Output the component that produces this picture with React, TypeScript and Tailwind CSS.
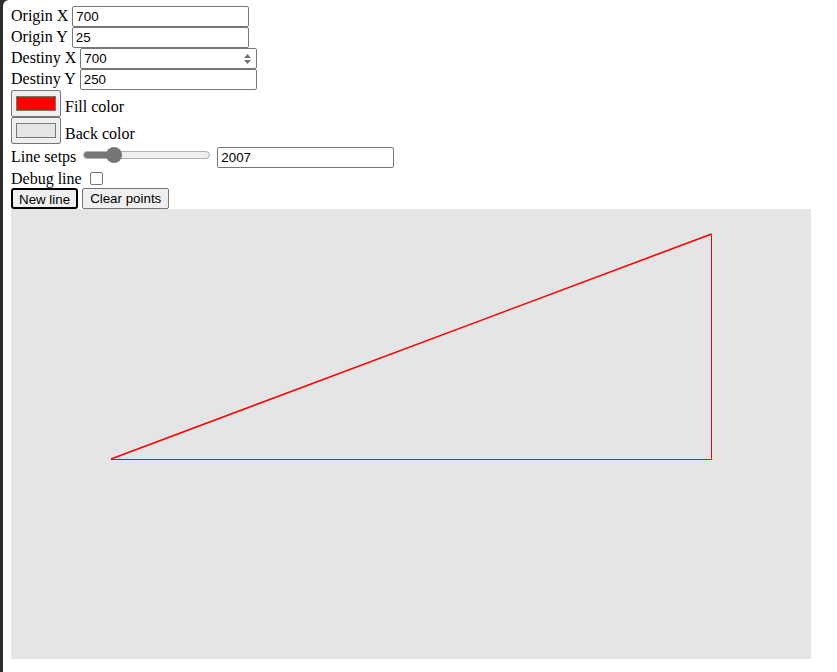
import React from "react";

const serif = "font-['Liberation_Serif','Times_New_Roman',serif] text-[16px] text-black";
const sans = "font-['Liberation_Sans',Arial,sans-serif] text-[13.33px] text-black";
const inputCls = `${sans} w-[177px] h-[21px] border border-[#767676] rounded-[2px] bg-white pl-[3px] pr-[2px] outline-none`;

function TextRow({ label, value }: { label: string; value: string }) {
  return (
    <div className="flex items-start gap-1 h-[21px]">
      <span className={`${serif} leading-[1.15] mt-[1px]`}>{label}</span>
      <input className={inputCls} defaultValue={value} />
    </div>
  );
}

function ColorRow({ label, color }: { label: string; color: string }) {
  return (
    <div className="flex items-end gap-1 h-[27px]">
      <div className="w-[50px] h-[27px] border border-[#767676] rounded-[2px] bg-[#efefef] pt-[5px] pl-[4px]">
        <div className="w-[40px] h-[15px] border border-[#777777]" style={{ backgroundColor: color }} />
      </div>
      <span className={`${serif} leading-[1.15] mb-[1px]`}>{label}</span>
    </div>
  );
}

export default function App() {
  return (
    <div className="min-h-screen bg-[#2d2d2d] pl-[3px]">
      <div className="min-h-screen bg-white rounded-tl-[6px] pl-[8px] pt-[6px]">
        <TextRow label="Origin X" value="700" />
        <TextRow label="Origin Y" value="25" />

        {/* number input with spinner */}
        <div className="flex items-start gap-1 h-[21px]">
          <span className={`${serif} leading-[1.15] mt-[1px]`}>Destiny X</span>
          <div className="flex items-center w-[177px] h-[21px] border border-[#767676] rounded-[2px] bg-white pl-[3px] pr-[3px]">
            <input className={`${sans} flex-1 min-w-0 outline-none bg-transparent`} defaultValue="700" />
            <svg width="9" height="12" viewBox="0 0 9 12" className="mr-[1px]">
              <path d="M4.5 1 L8 5 L1 5 Z" fill="#717171" />
              <path d="M1 7 L8 7 L4.5 11 Z" fill="#717171" />
            </svg>
          </div>
        </div>

        <TextRow label="Destiny Y" value="250" />

        <ColorRow label="Fill color" color="#ff0000" />
        <ColorRow label="Back color" color="#e5e5e5" />

        {/* slider row */}
        <div className="flex items-start gap-1 h-[24px]">
          <span className={`${serif} leading-[1.15] mt-[4px]`}>Line setps</span>
          <div className="relative ml-[3px] mr-[3px] mt-[3px] w-[127px] h-[16px] flex items-center">
            <div className="w-full h-[8px] rounded-full border border-[#b2b2b2] bg-[#efefef] overflow-hidden">
              <div className="w-[31px] h-full bg-[#767676]" />
            </div>
            <div className="absolute left-[23px] top-0 w-[16px] h-[16px] rounded-full bg-[#767676]" />
          </div>
          <input className={`${inputCls} mt-[3px]`} defaultValue="2007" />
        </div>

        {/* debug row */}
        <div className="flex items-start gap-1 h-[20px]">
          <span className={`${serif} leading-[1.15] mt-[2px]`}>Debug line</span>
          <input
            type="checkbox"
            className="appearance-none ml-[4px] mt-[4px] w-[13px] h-[13px] border border-[#767676] rounded-[2px] bg-white"
          />
        </div>

        {/* buttons */}
        <div className="flex items-start gap-1 h-[21px]">
          <button className={`${sans} h-[21px] px-[6px] border-2 border-black rounded-[3px] bg-[#efefef]`}>
            New line
          </button>
          <button className={`${sans} h-[21px] px-[7px] border border-[#767676] rounded-[2px] bg-[#efefef]`}>
            Clear points
          </button>
        </div>

        {/* canvas */}
        <div className="w-[800px] h-[450px] bg-[#e5e5e5]">
          <svg width="800" height="450" viewBox="0 0 800 450">
            <line x1="100" y1="250.5" x2="700.5" y2="250.5" stroke="#ff0000" strokeWidth="1" />
            <line x1="700.5" y1="25" x2="700.5" y2="250.5" stroke="#ff0000" strokeWidth="1" />
            <line x1="100" y1="250" x2="700.5" y2="25" stroke="#ff0000" strokeWidth="1.6" />
          </svg>
        </div>
      </div>
    </div>
  );
}
